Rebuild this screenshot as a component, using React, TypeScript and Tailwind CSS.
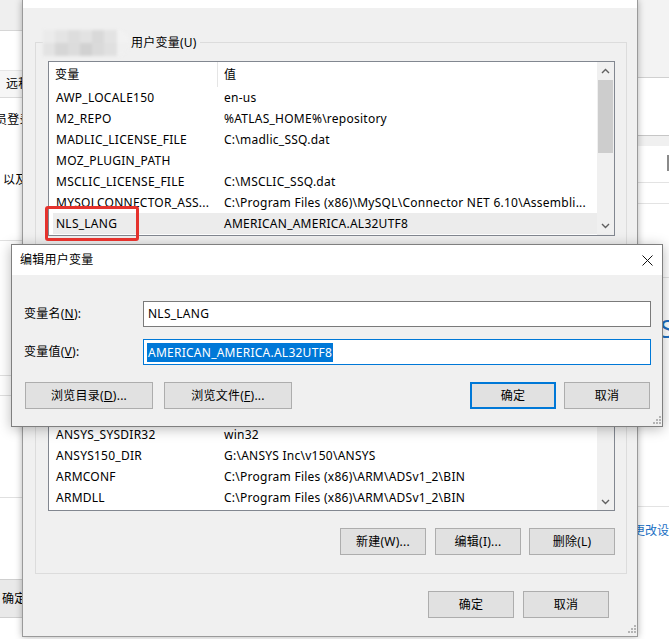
import React from "react";

const Chevron = ({ up }: { up?: boolean }) => (
  <svg width="9" height="6" viewBox="0 0 9 6">
    <polyline
      points={up ? "1,5 4.5,1.5 8,5" : "1,1 4.5,4.5 8,1"}
      fill="none"
      stroke="#606060"
      strokeWidth="1.4"
    />
  </svg>
);

const Grip = () => (
  <svg width="8" height="8" viewBox="0 0 8 8">
    {[
      [6, 0],
      [3, 3],
      [6, 3],
      [0, 6],
      [3, 6],
      [6, 6],
    ].map(([x, y], i) => (
      <rect key={i} x={x} y={y} width="2" height="2" fill="#b4b4b4" />
    ))}
  </svg>
);

type Row = [string, string];

const userRows: Row[] = [
  ["AWP_LOCALE150", "en-us"],
  ["M2_REPO", "%ATLAS_HOME%\\repository"],
  ["MADLIC_LICENSE_FILE", "C:\\madlic_SSQ.dat"],
  ["MOZ_PLUGIN_PATH", ""],
  ["MSCLIC_LICENSE_FILE", "C:\\MSCLIC_SSQ.dat"],
  ["MYSQLCONNECTOR_ASS...", "C:\\Program Files (x86)\\MySQL\\Connector NET 6.10\\Assembli..."],
  ["NLS_LANG", "AMERICAN_AMERICA.AL32UTF8"],
];

const sysRows: Row[] = [
  ["ALLUSERSPROFILE", "C:\\ProgramData"],
  ["ANSYS150_DIR", "G:\\ANSYS Inc\\v150\\ANSYS"],
  ["ANSYS_SYSDIR", "winx64"],
  ["ANSYS_SYSDIR32", "win32"],
  ["ANSYS150_DIR", "G:\\ANSYS Inc\\v150\\ANSYS"],
  ["ARMCONF", "C:\\Program Files (x86)\\ARM\\ADSv1_2\\BIN"],
  ["ARMDLL", "C:\\Program Files (x86)\\ARM\\ADSv1_2\\BIN"],
];

const ListRow = ({ name, value, selected }: { name: string; value: string; selected?: boolean }) => (
  <div className={selected ? "flex h-[21px] shrink-0 items-center ml-[4px] bg-[#ececec]" : "flex h-[21px] shrink-0 items-center ml-[4px]"}>
    <div className="w-[168px] pl-[3px] whitespace-nowrap overflow-hidden leading-[21px]">{name}</div>
    <div className="flex-1 pl-[3px] whitespace-nowrap overflow-hidden leading-[21px]">{value}</div>
  </div>
);

const Header = () => (
  <div className="flex h-[25px] shrink-0 items-center ml-[4px]">
    <div className="w-[164px] pl-[2px] leading-[25px]">变量</div>
    <div className="w-[1px] h-[25px] bg-[#e5e5e5]" />
    <div className="flex-1 pl-[6px] leading-[25px]">值</div>
  </div>
);

const Btn = ({ children, w, primary }: { children: React.ReactNode; w: string; primary?: boolean }) => (
  <div
    className={
      (primary
        ? "border-2 border-[#0078d7] "
        : "border border-[#adadad] ") +
      "h-[27px] bg-[#e1e1e1] flex items-center justify-center leading-none whitespace-nowrap " +
      w
    }
  >
    {children}
  </div>
);

const Background = () => (
  <div className="absolute inset-0 flex bg-white">
    <div className="w-[60px] flex flex-col">
      <div className="h-[31px] bg-[#efefef] border-b border-[#d6d6d6]" />
      <div className="h-[40px] bg-white border-b border-[#e6e6e6]" />
      <div className="h-[27px] bg-[#f6f6f6] border-b border-[#dadada] flex items-center pl-[6px] whitespace-nowrap leading-none">远程桌面</div>
      <div className="h-[43px] flex items-center -ml-[5px] whitespace-nowrap leading-none">员登录设置</div>
      <div className="h-[78px] flex items-center pl-[3px] whitespace-nowrap leading-none">以及</div>
      <div className="h-[22px] border-b border-[#e0e0e0]" />
      <div className="h-[135px] border-b border-[#e0e0e0]" />
      <div className="h-[20px] border-b border-[#e0e0e0]" />
      <div className="h-[102px] border-b border-[#e0e0e0]" />
      <div className="h-[81px]" />
      <div className="h-[39px] bg-[#e9e9e9] border-y border-[#cfcfcf] flex items-center pl-[2px] whitespace-nowrap leading-none">确定</div>
    </div>
    <div className="ml-auto w-[60px] flex flex-col">
      <div className="h-[78px] bg-[#f3f3f3] border-b border-[#d0d0d0]" />
      <div className="h-[58px] bg-white border-b border-[#c6c6c6]" />
      <div className="h-[10px] bg-[#f0f0f0]" />
      <div className="h-[37px] bg-white border-b border-[#e3e3e3] flex justify-end pt-[9px]">
        <div className="w-[2px] h-[16px] bg-[#8a8a8a]" />
      </div>
      <div className="h-[21px] border-b border-[#e3e3e3]" />
      <div className="h-[74px] border-b border-[#e3e3e3]" />
      <div className="h-[100px] flex items-center pl-[51px] text-[26px] text-[#1b6ec2] leading-none">S</div>
      <div className="h-[129px] border-b border-[#e3e3e3]" />
      <div className="h-[48px] flex items-center pl-[24px] whitespace-nowrap text-[#1a6fc4] leading-none tracking-normal">更改设置</div>
    </div>
  </div>
);

const MainDialog = () => (
  <div className="absolute left-[22px] top-0 w-[616px] h-[637px] bg-[#f0f0f0] border-l border-r border-b border-[#9a9a9a] shadow-[0_0_7px_rgba(0,0,0,0.3)] flex flex-col">
    <div className="h-[8px] bg-white shrink-0" />
    <div className="pl-[12px] pr-[10px] pt-[34px] flex flex-col">
      {/* user variables group */}
      <div className="relative h-[248px] border border-[#dcdcdc] pt-[18px] pl-[12px] pr-[11px]">
        <div className="absolute left-[7px] -top-[13px] h-[26px] flex items-center bg-[#f0f0f0] pr-[3px]">
          <div className="w-[86px] h-[26px] grid grid-cols-7 grid-rows-2 blur-[1.5px] rounded-r-[12px] overflow-hidden">
            <div className="bg-[#ebebeb]" />
            <div className="bg-[#e4e4e4]" />
            <div className="bg-[#dddddd]" />
            <div className="bg-[#e2e2e2]" />
            <div className="bg-[#d9d9d9]" />
            <div className="bg-[#e3e3e3]" />
            <div className="bg-[#f2f2f2]" />
            <div className="bg-[#e3e3e3]" />
            <div className="bg-[#d6d6d6]" />
            <div className="bg-[#dcdcdc]" />
            <div className="bg-[#d1d1d1]" />
            <div className="bg-[#dadada]" />
            <div className="bg-[#e0e0e0]" />
            <div className="bg-[#f0f0f0]" />
          </div>
          <span className="ml-[2px] whitespace-nowrap leading-none">用户变量(U)</span>
        </div>
        <div className="h-[175px] bg-white border border-[#828790] flex">
          <div className="flex-1 flex flex-col overflow-hidden">
            <Header />
            {userRows.map((r, i) => (
              <ListRow key={i} name={r[0]} value={r[1]} selected={r[0] === "NLS_LANG"} />
            ))}
          </div>
          <div className="w-[17px] flex flex-col bg-[#f0f0f0]">
            <div className="h-[18px] flex items-center justify-center">
              <Chevron up />
            </div>
            <div className="h-[73px] mx-[1px] bg-[#cdcdcd]" />
            <div className="flex-1" />
            <div className="h-[18px] flex items-center justify-center">
              <Chevron />
            </div>
          </div>
        </div>
        <div className="flex justify-end gap-[8px] mt-[16px]">
          <Btn w="w-[86px] mr-[1px]">新建(N)...</Btn>
          <Btn w="w-[86px]">编辑(E)...</Btn>
          <Btn w="w-[86px]">删除(D)</Btn>
        </div>
      </div>
      {/* system variables group */}
      <div className="mt-[8px] h-[276px] border border-[#dcdcdc] pt-[18px] pb-[18px] pl-[12px] pr-[11px] flex flex-col">
        <div className="flex-1 bg-white border border-[#828790] flex min-h-0">
          <div className="flex-1 flex flex-col justify-end overflow-hidden pb-[2px]">
            <Header />
            {sysRows.map((r, i) => (
              <ListRow key={i} name={r[0]} value={r[1]} />
            ))}
          </div>
          <div className="w-[17px] flex flex-col bg-[#f0f0f0]">
            <div className="h-[18px] flex items-center justify-center">
              <Chevron up />
            </div>
            <div className="h-[40px] mx-[1px] bg-[#cdcdcd]" />
            <div className="flex-1" />
            <div className="h-[17px] flex items-center justify-center">
              <Chevron />
            </div>
          </div>
        </div>
        <div className="flex justify-end gap-[8px] mt-[17px]">
          <Btn w="w-[86px] mr-[1px]">新建(W)...</Btn>
          <Btn w="w-[86px]">编辑(I)...</Btn>
          <Btn w="w-[86px]">删除(L)</Btn>
        </div>
      </div>
    </div>
    <div className="flex justify-end gap-[9px] mt-[17px] pr-[28px]">
      <Btn w="w-[86px]">确定</Btn>
      <Btn w="w-[86px]">取消</Btn>
    </div>
    <div className="flex-1 flex items-end justify-end pr-[1px] pb-[3px]">
      <Grip />
    </div>
  </div>
);

const EditDialog = () => (
  <div className="absolute left-[11px] top-[244px] w-[652px] bg-[#f0f0f0] border border-[#7f7f7f] shadow-[0_2px_12px_rgba(0,0,0,0.28)] flex flex-col">
    <div className="h-[30px] bg-white flex items-center pl-[8px] pr-[9px]">
      <span className="leading-none">编辑用户变量</span>
      <div className="ml-auto">
        <svg width="11" height="11" viewBox="0 0 11 11">
          <line x1="0.5" y1="0.5" x2="10.5" y2="10.5" stroke="#111" strokeWidth="1" />
          <line x1="10.5" y1="0.5" x2="0.5" y2="10.5" stroke="#111" strokeWidth="1" />
        </svg>
      </div>
    </div>
    <div className="pt-[26px] pl-[12px] pr-[11px] flex flex-col">
      <div className="flex items-center">
        <div className="w-[119px] leading-none">
          变量名(<span className="underline">N</span>):
        </div>
        <div className="flex-1 h-[26px] bg-white border border-[#7a7a7a] flex items-center pl-[4px] leading-none">NLS_LANG</div>
      </div>
      <div className="flex items-center mt-[12px]">
        <div className="w-[119px] leading-none">
          变量值(<span className="underline">V</span>):
        </div>
        <div className="flex-1 h-[26px] bg-white border border-[#0078d7] flex items-center pl-[3px]">
          <span className="bg-[#0078d7] text-white leading-[19px] px-[1px]">AMERICAN_AMERICA.AL32UTF8</span>
        </div>
      </div>
    </div>
    <div className="flex items-center mt-[17px] pl-[13px] pr-[12px]">
      <Btn w="w-[128px]">
        浏览目录(<span className="underline">D</span>)...
      </Btn>
      <div className="ml-[11px]">
        <Btn w="w-[128px]">
          浏览文件(<span className="underline">F</span>)...
        </Btn>
      </div>
      <div className="ml-auto flex gap-[8px]">
        <Btn w="w-[86px]" primary>
          确定
        </Btn>
        <Btn w="w-[86px]">取消</Btn>
      </div>
    </div>
    <div className="h-[17px] flex items-end justify-end pr-[1px] pb-[2px]">
      <Grip />
    </div>
  </div>
);

export default function App() {
  return (
    <div className="relative w-[669px] h-[639px] overflow-hidden bg-white text-[12px] tracking-[0.25px] text-black font-['Noto_Sans','Noto_Sans_CJK_SC',sans-serif]">
      <Background />
      <MainDialog />
      <EditDialog />
      <div className="absolute left-[45px] top-[206px] w-[94px] h-[35px] border-[3px] border-[#e5322d] rounded-[3px]" />
    </div>
  );
}
